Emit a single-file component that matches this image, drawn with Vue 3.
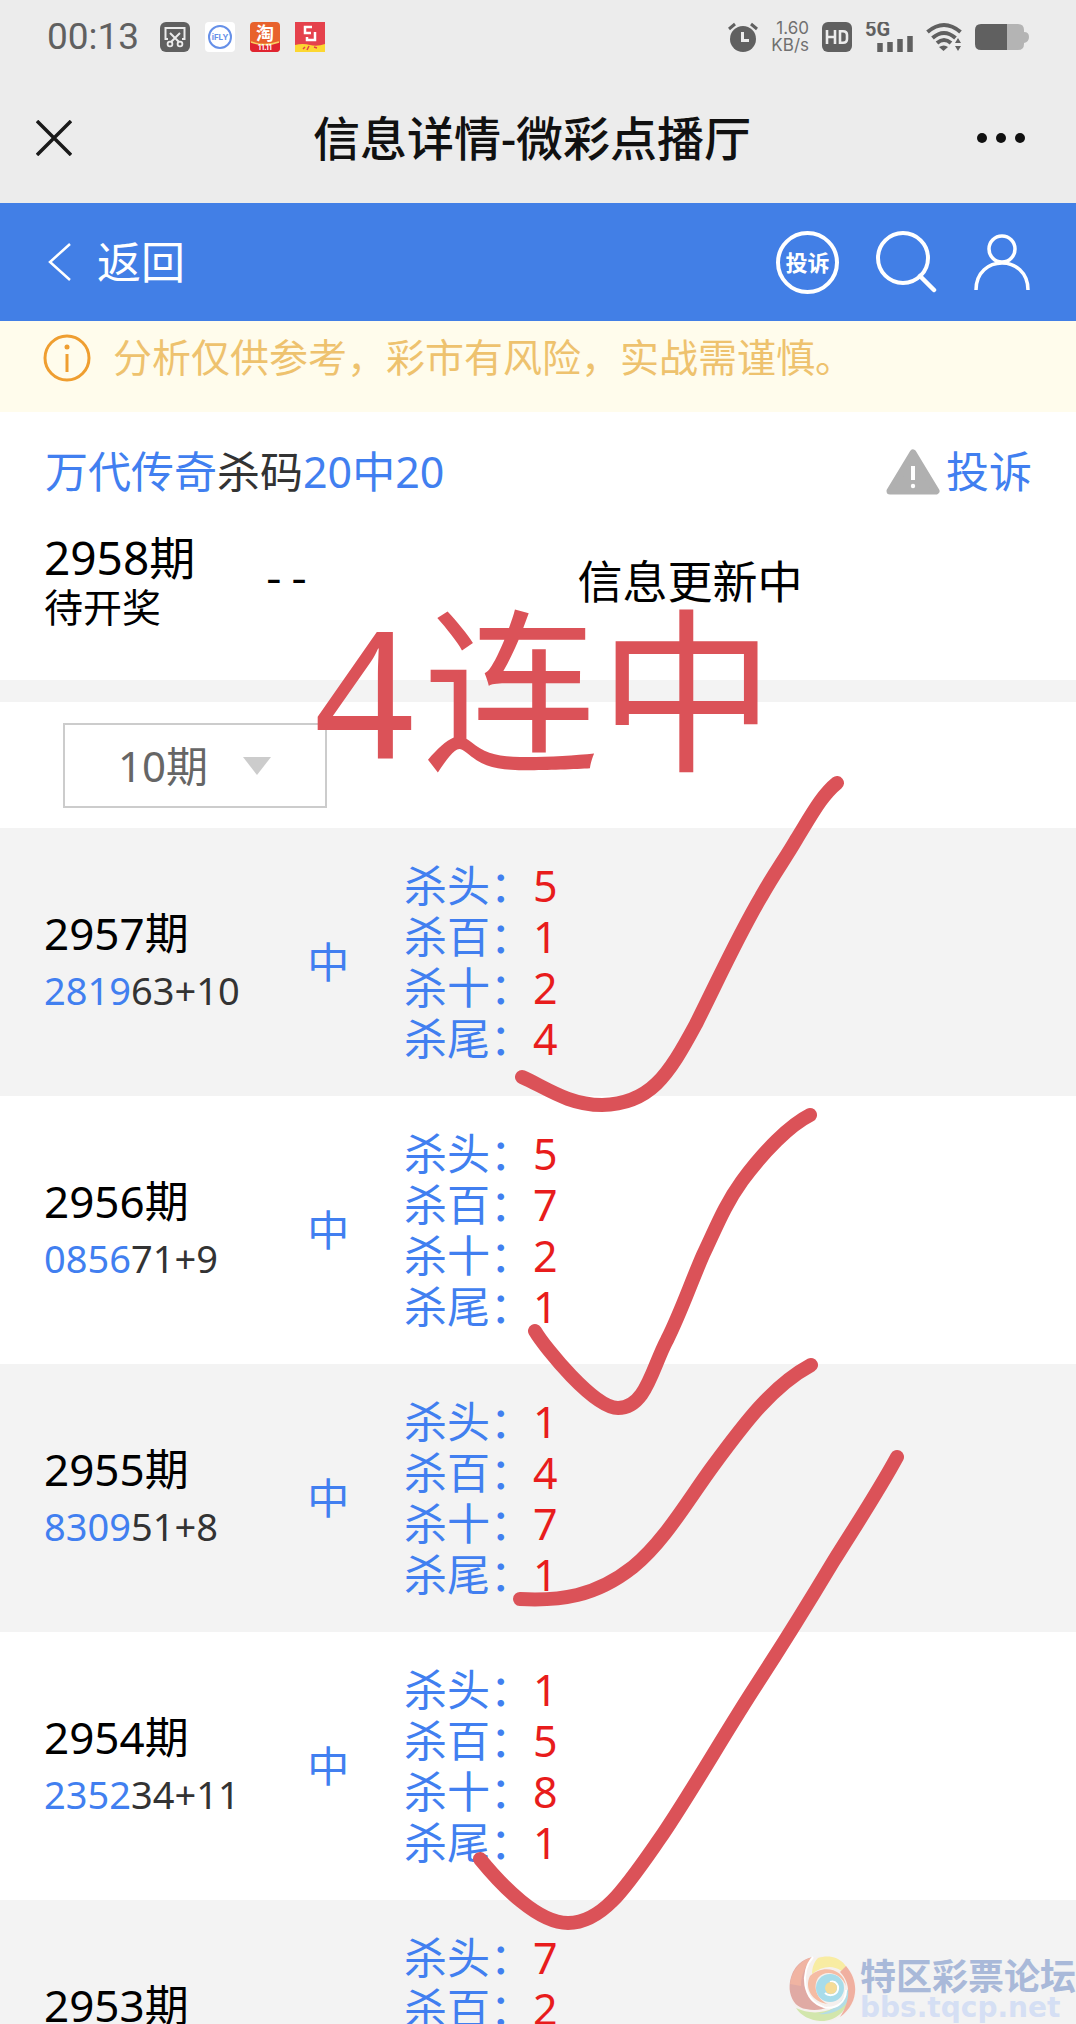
<template>
  <div class="page">
    <header class="top">
      <div class="status">
        <div class="status-group">
          <span class="clock">00:13</span>
          <svg class="app-icon" viewBox="0 0 30 30">
            <rect width="30" height="30" rx="6" fill="#606060" />
            <path d="M8 17H5.500V6H24.500V17H22" fill="none" stroke="#ececec" stroke-width="2" />
            <path d="M10 11L19 20M20 11L11 20" stroke="#ececec" stroke-width="2" />
            <circle cx="10" cy="22" r="2.400" fill="none" stroke="#ececec" stroke-width="1.800" />
            <circle cx="20" cy="22" r="2.400" fill="none" stroke="#ececec" stroke-width="1.800" />
          </svg>
          <svg class="app-icon" viewBox="0 0 30 30">
            <rect width="30" height="30" rx="4" fill="#fff" />
            <circle cx="15" cy="15" r="11" fill="none" stroke="#6690e8" stroke-width="2" />
            <text x="15" y="18" class="ifly">iFLY</text>
          </svg>
          <svg class="app-icon" viewBox="0 0 30 30">
            <rect width="30" height="30" rx="4" fill="#e8622c" />
            <path d="M0 20Q15 25 30 20V26Q30 30 26 30H4Q0 30 0 26Z" fill="#e02430" />
            <path d="M1 20Q15 25 29 20" fill="none" stroke="#f8d060" stroke-width="1.500" />
            <text x="15" y="18" class="tao">淘</text>
            <text x="15" y="28" class="tao-day">11.11</text>
          </svg>
          <svg class="app-icon" viewBox="0 0 30 30">
            <rect width="30" height="30" fill="#e5414c" />
            <path d="M0 23Q8 21 15 23T30 22V30H0Z" fill="#fcd731" />
            <path d="M17 5H10V11H16M20 10V18H12V15" fill="none" stroke="#fff" stroke-width="2.500" />
            <path d="M8 27l2-2M12 28l2-4M19 25l3 1" stroke="#e5414c" stroke-width="1.500" />
          </svg>
        </div>
        <div class="status-group status-right">
          <svg class="app-icon" viewBox="0 0 30 30">
            <circle cx="15" cy="17" r="13" fill="#606060" />
            <path d="M1 7L7 2M29 7L23 2" stroke="#606060" stroke-width="3" />
            <path d="M14.500 10V18.500H21" fill="none" stroke="#ececec" stroke-width="3" />
          </svg>
          <span class="speed">1.60<br />KB/s</span>
          <svg class="app-icon" viewBox="0 0 30 30">
            <rect width="30" height="30" rx="6" fill="#606060" />
            <path d="M5 8V22M13 8V22M5 15H13M18 9.200H21Q25 9.200 25 13V17Q25 20.800 21 20.800H18Z" fill="none" stroke="#ececec" stroke-width="2.600" />
          </svg>
          <svg class="signal" viewBox="0 0 48 30">
            <text x="0" y="14" class="net">5G</text>
            <path d="M15 30V21M25 30V20M35 30V17M45 30V14" stroke="#606060" stroke-width="5.500" />
          </svg>
          <svg class="wifi" viewBox="0 0 36 30">
            <path d="M1.500 10Q18 -4 34.500 10M6.500 16Q18 6 29.500 16M11 21Q18 15 25 21" fill="none" stroke="#606060" stroke-width="4" />
            <path d="M13 25Q18 22 22 25L17.500 29ZM32 16l3 5h-6ZM32 29l3-5h-6Z" fill="#606060" />
          </svg>
          <svg class="battery" viewBox="0 0 54 28">
            <path d="M32 1H43Q49 1 49 7V9Q54 9 54 14T49 20V21Q49 27 43 27H32Z" fill="#b4b4b4" />
            <path d="M32 1H6Q0 1 0 7V21Q0 27 6 27H32Z" fill="#606060" />
          </svg>
        </div>
      </div>
      <div class="nav">
        <button class="icon-btn" aria-label="关闭">
          <svg width="36" height="36" viewBox="0 0 36 36">
            <path d="M1 1L35 35M35 1L1 35" stroke="#1a1a1a" stroke-width="3.500" />
          </svg>
        </button>
        <h1 class="nav-title">信息详情-微彩点播厅</h1>
        <button class="icon-btn" aria-label="更多">
          <svg width="50" height="12" viewBox="0 0 50 12">
            <circle cx="6" cy="6" r="5" fill="#111" />
            <circle cx="25" cy="6" r="5" fill="#111" />
            <circle cx="44" cy="6" r="5" fill="#111" />
          </svg>
        </button>
      </div>
    </header>

    <div class="bar">
      <a class="back" href="#">
        <svg width="24" height="38" viewBox="0 0 24 38">
          <path d="M22 1L2 19L22 37" fill="none" stroke="#fff" stroke-width="2.500" />
        </svg>
        返回
      </a>
      <div class="bar-actions">
        <button class="icon-btn round">投诉</button>
        <button class="icon-btn" aria-label="搜索">
          <svg width="62" height="64" viewBox="0 0 62 64">
            <circle cx="28" cy="28" r="25" fill="none" stroke="#fff" stroke-width="4" />
            <path d="M45 46L59 60" stroke="#fff" stroke-width="4.500" stroke-linecap="round" />
          </svg>
        </button>
        <button class="icon-btn" aria-label="我的">
          <svg width="58" height="60" viewBox="0 0 58 60">
            <circle cx="29" cy="17" r="13" fill="none" stroke="#fff" stroke-width="3.500" />
            <path d="M3 58C3 22 55 22 55 58" fill="none" stroke="#fff" stroke-width="3.500" />
          </svg>
        </button>
      </div>
    </div>

    <p class="notice">
      <svg width="48" height="48" viewBox="0 0 48 48">
        <circle cx="24" cy="24" r="22" fill="none" stroke="#ef9e30" stroke-width="3" />
        <circle cx="24" cy="13" r="2.500" fill="#ef9e30" />
        <path d="M24 20V38" stroke="#ef9e30" stroke-width="3" />
      </svg>
      分析仅供参考，彩市有风险，实战需谨慎。
    </p>

    <section class="plan">
      <div class="plan-head">
        <h2 class="plan-title"><em>万代传奇</em>杀码<em>20中20</em></h2>
        <a class="report" href="#">
          <svg width="54" height="46" viewBox="0 0 54 46">
            <path d="M27 4L50 42H4Z" fill="#b0b0b0" stroke="#b0b0b0" stroke-width="7" stroke-linejoin="round" />
            <path d="M27 17V31" stroke="#fff" stroke-width="4" />
            <circle cx="27" cy="37" r="2.200" fill="#fff" />
          </svg>
          投诉
        </a>
      </div>
      <div class="current">
        <div class="current-issue">
          <p class="issue">2958期</p>
          <p class="pending">待开奖</p>
        </div>
        <span class="current-result">--</span>
        <span class="current-info">信息更新中</span>
      </div>
    </section>

    <div class="filter">
      <div class="select-box">
        <select v-model="range" aria-label="期数">
          <option v-for="n in ranges" :key="n" :value="n">{{ n }}期</option>
        </select>
        <svg class="caret" width="28" height="18" viewBox="0 0 28 18">
          <path d="M0 0H28L14 18Z" fill="#ccc" />
        </svg>
      </div>
    </div>

    <table class="history">
      <tbody>
        <tr v-for="row in rows" :key="row.issue">
          <td class="col-issue">
            <p class="row-issue">{{ row.issue }}期</p>
            <p class="row-number"><em>{{ row.head }}</em>{{ row.tail }}</p>
          </td>
          <td class="col-hit">{{ row.hit }}</td>
          <td class="col-kills">
            <p v-for="(n, i) in row.kills" :key="i" class="kill">
              {{ labels[i] }}：<b>{{ n }}</b>
            </p>
          </td>
        </tr>
      </tbody>
    </table>

    <p class="mark-text"><span>4</span><span>连中</span></p>
    <svg class="marks">
      <path v-for="d in strokes" :key="d" :d="d" />
    </svg>

    <div class="watermark">
      <svg width="70" height="70" viewBox="0 0 70 70">
        <circle cx="35" cy="35" r="33" fill="#f5f0ee" />
        <path d="M25 3C8 6 0 22 2 38C4 48 10 54 18 55C26 57 34 56 40 53C20 50 8 28 25 3Z" fill="#e0aaa4" />
        <path d="M25 3C12 6 4 16 2 30L13 32C13 20 18 10 25 3Z" fill="#f0b4a2" />
        <path d="M8 54C24 62 48 60 62 40C60 58 46 68 32 67C22 66 13 62 8 54Z" fill="#d2e6ac" />
        <path d="M30 60C46 58 58 46 62 28C68 44 54 62 30 60Z" fill="#b4dde6" />
        <path d="M30 4C48 -2 62 10 62 26C54 12 38 8 24 20C24 14 26 8 30 4Z" fill="#f8eca2" />
        <path d="M58 12C72 28 70 50 52 63C62 48 64 30 52 18Z" fill="#f0b0a0" />
        <path d="M22 22C34 10 56 14 58 32C54 20 38 14 30 24C24 34 30 46 40 50C24 48 16 34 22 22Z" fill="#f5bca4" />
        <circle cx="42" cy="34" r="14" fill="#a8dcea" />
        <path d="M42 28C48 26 52 32 49 38C46 42 40 42 37 39" fill="none" stroke="#fff" stroke-width="2" />
        <circle cx="43" cy="34" r="6" fill="#f6dc98" />
        <path d="M25 3C12 18 14 46 36 53C48 56 58 48 58 36" fill="none" stroke="#fff" stroke-width="2" />
      </svg>
      <div>
        <p class="watermark-name">特区彩票论坛</p>
        <p class="watermark-url">bbs.tqcp.net</p>
      </div>
    </div>
  </div>
</template>

<script setup>
import { ref } from 'vue'

const range = ref(10)
const ranges = [10, 20, 30]

const labels = ['杀头', '杀百', '杀十', '杀尾']

const rows = [
  { issue: 2957, head: '2819', tail: '63+10', hit: '中', kills: [5, 1, 2, 4] },
  { issue: 2956, head: '0856', tail: '71+9', hit: '中', kills: [5, 7, 2, 1] },
  { issue: 2955, head: '8309', tail: '51+8', hit: '中', kills: [1, 4, 7, 1] },
  { issue: 2954, head: '2352', tail: '34+11', hit: '中', kills: [1, 5, 8, 1] },
  { issue: 2953, head: '', tail: '', hit: '', kills: [7, 2] },
]

// hand-drawn ticks over the list
const strokes = [
  'M522 1077C545 1087 568 1105 602 1105C650 1104 668 1076 696 1024C720 976 738 936 761 897C775 872 785 859 796 840C812 814 822 795 837 783',
  'M535 1331C545 1348 594 1408 618 1408C646 1408 652 1368 667 1340C681 1312 690 1285 703 1255C716 1228 724 1206 742 1181C764 1151 790 1125 810 1115',
  'M520 1599C560 1601 595 1597 633 1567C664 1542 688 1500 713 1466C744 1424 772 1386 811 1365',
  'M480 1859C502 1886 538 1923 568 1923C604 1923 628 1884 663 1834C694 1788 725 1733 757 1684C785 1641 806 1607 833 1562C858 1522 878 1492 897 1457',
]
</script>

<style>
body {
  margin: 0;
  background: #fff;
}
</style>

<style scoped>
.page {
  position: relative;
  height: 100vh;
  overflow: hidden;
  font-family: "Noto Sans", "Noto Sans CJK SC", sans-serif;
  line-height: 1.2;
  color: #000;
  background: #fff;
}

p,
h1,
h2 {
  margin: 0;
  font-weight: 400;
}

em,
b {
  font-style: normal;
  font-weight: 400;
}

svg {
  flex: none;
}

.icon-btn {
  display: flex;
  align-items: center;
  justify-content: center;
  padding: 0;
  border: 0;
  background: none;
}

.top {
  background: #ececec;
}

.status {
  display: flex;
  align-items: center;
  justify-content: space-between;
  height: 73px;
  padding: 0 47px;
}

.status-group {
  display: flex;
  align-items: center;
  gap: 15px;
}

.status-right {
  gap: 13px;
}

.clock {
  margin-right: 6px;
  font: 37px/48px Roboto, sans-serif;
  color: #606060;
}

.app-icon {
  width: 30px;
  height: 30px;
}

.ifly {
  font: bold 8px Inter, sans-serif;
  fill: #6690e8;
  text-anchor: middle;
}

.tao {
  font: bold 18px "Noto Sans CJK SC", sans-serif;
  fill: #fff;
  text-anchor: middle;
}

.tao-day {
  font: bold 7px Inter, sans-serif;
  fill: #fff;
  text-anchor: middle;
}

.speed {
  font: 17px/17px Inter, sans-serif;
  color: #707070;
  text-align: right;
}

.signal {
  width: 48px;
  height: 30px;
}

.net {
  font: bold 20px Roboto, sans-serif;
  fill: #606060;
}

.wifi {
  width: 36px;
  height: 30px;
}

.battery {
  width: 54px;
  height: 28px;
}

.nav {
  display: flex;
  align-items: center;
  justify-content: space-between;
  height: 130px;
  padding: 0 50px 0 36px;
}

.nav-title {
  flex: 1;
  padding-left: 16px;
  font-size: 47px;
  font-weight: 500;
  color: #111;
  text-align: center;
}

.bar {
  display: flex;
  align-items: center;
  justify-content: space-between;
  height: 118px;
  padding: 0 45px 0 48px;
  background: #427fe6;
}

.back {
  display: flex;
  align-items: center;
  gap: 25px;
  font-size: 44px;
  color: #fff;
  text-decoration: none;
}

.bar-actions {
  display: flex;
  align-items: center;
  gap: 36px;
}

.round {
  box-sizing: border-box;
  width: 63px;
  height: 63px;
  border: 4px solid #fff;
  border-radius: 50%;
  font-family: inherit;
  font-size: 22px;
  font-weight: 700;
  line-height: 24px;
  color: #fff;
}

.notice {
  display: flex;
  align-items: center;
  gap: 22px;
  box-sizing: border-box;
  height: 91px;
  padding: 0 43px 18px;
  font-size: 39px;
  color: #eec26e;
  background: #fffcec;
}

.plan {
  border-bottom: 22px solid #f3f3f3;
}

.plan-head {
  display: flex;
  align-items: center;
  justify-content: space-between;
  height: 120px;
  padding: 0 44px 0 45px;
}

.plan-title {
  font-size: 43px;
  color: #333;
}

em,
.report {
  color: #417ff0;
}

.report {
  display: flex;
  align-items: center;
  gap: 6px;
  font-size: 43px;
  text-decoration: none;
}

.current {
  display: flex;
  align-items: center;
  height: 100px;
  padding: 0 44px 48px;
}

.current-issue {
  width: 22%;
}

.issue {
  font-size: 46px;
  line-height: 50px;
}

.pending {
  font-size: 39px;
  line-height: 50px;
}

.current-result {
  width: 32%;
  font-family: "Liberation Mono", monospace;
  font-size: 42px;
}

.current-info {
  font-size: 45px;
}

.filter {
  padding: 21px 63px 20px;
}

.select-box {
  display: inline-flex;
  position: relative;
  vertical-align: top;
}

.select-box select {
  appearance: none;
  box-sizing: border-box;
  width: 264px;
  height: 85px;
  padding: 0 0 0 53px;
  border: 2px solid #ccc;
  border-radius: 0;
  background: #fff;
  font-family: inherit;
  font-size: 42px;
  color: #666;
}

.caret {
  position: absolute;
  top: 34px;
  right: 56px;
  pointer-events: none;
}

.history {
  width: 100%;
  border-collapse: collapse;
  table-layout: fixed;
}

.history tr {
  height: 268px;
}

.history tr:nth-child(odd) {
  background: #f3f3f3;
}

.history td {
  padding: 0;
  vertical-align: middle;
}

.history .col-issue {
  width: 24%;
  padding-left: 44px;
  box-sizing: border-box;
}

.row-issue {
  font-size: 44px;
  line-height: 57px;
}

.row-number {
  min-height: 57px;
  font-size: 38px;
  line-height: 57px;
  color: #333;
}

.col-hit {
  width: 13%;
  font-size: 42px;
  color: #417ff0;
  text-align: center;
}

.history .col-kills {
  padding: 32px 0 0 6px;
  vertical-align: top;
}

.kill {
  font-size: 43px;
  line-height: 51px;
  color: #417ff0;
}

.kill b {
  color: #e81c1c;
}

.mark-text {
  position: absolute;
  top: 590px;
  left: 314px;
  display: flex;
  gap: 8px;
  font-size: 176px;
  line-height: 200px;
  color: #db5258;
}

.marks {
  position: absolute;
  top: 0;
  left: 0;
  width: 100%;
  height: 100%;
  pointer-events: none;
}

.marks path {
  fill: none;
  stroke: #db5258;
  stroke-width: 14;
  stroke-linecap: round;
  stroke-linejoin: round;
}

.watermark {
  position: absolute;
  right: 0;
  bottom: 0;
  display: flex;
  align-items: center;
  gap: 2px;
}

.watermark-name {
  font-size: 36px;
  font-weight: 700;
  line-height: 38px;
  color: #a9b9d9;
}

.watermark-url {
  font: bold 28px/24px "DejaVu Sans", sans-serif;
  color: #d5dff4;
}
</style>
